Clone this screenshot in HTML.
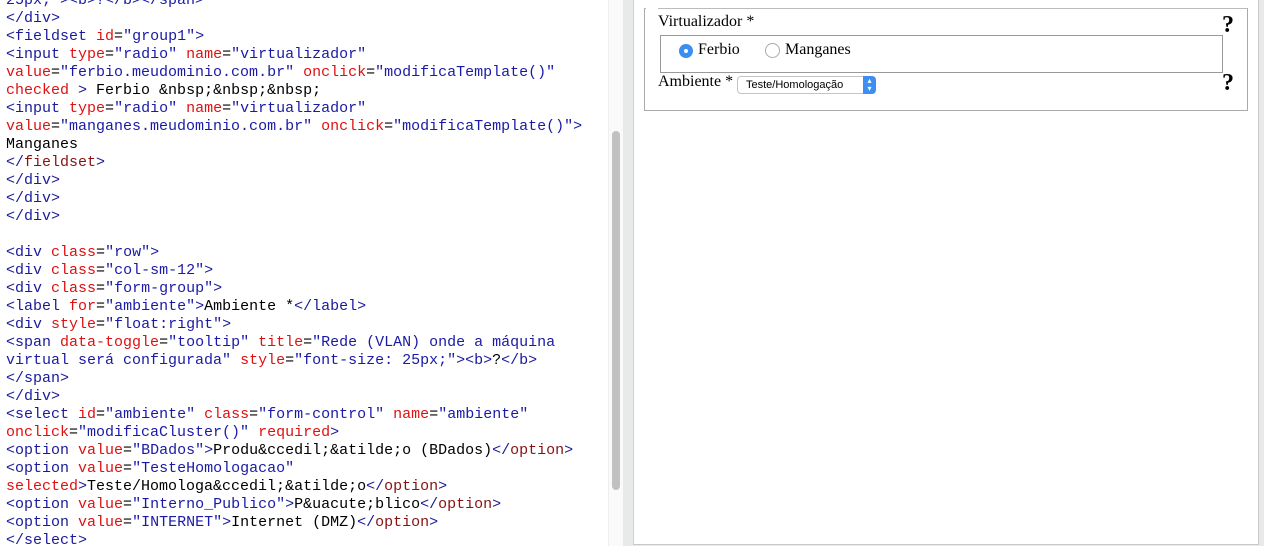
<!DOCTYPE html>
<html><head><meta charset="utf-8"><style>
html,body{margin:0;padding:0;width:1264px;height:546px;overflow:hidden;background:#e8e9e9;}
#left{position:absolute;left:0;top:0;width:623px;height:546px;background:#fff;overflow:hidden;}
#code{position:absolute;left:6px;top:-8px;font-family:"Liberation Mono",monospace;font-size:15px;line-height:18px;white-space:pre;color:#000;}
.t{color:#1a1a9a}.a{color:#e01010}.s{color:#1a1aa6}.c{color:#000}.n{color:#881212}
#track{position:absolute;left:608px;top:0;width:15px;height:546px;background:#fafafa;border-left:1px solid #eee;}
#thumb{position:absolute;left:612px;top:131px;width:8px;height:359px;background:#c1c1c1;border-radius:4px;}
#right{position:absolute;left:633px;top:0;width:624px;height:544px;background:#fff;border-left:1px solid #d0d0d0;border-bottom:1px solid #c8c8c8;border-right:1px solid #c8c8c8;}
.f{font-family:"Liberation Serif",serif;font-size:16px;color:#000;position:absolute;}
</style></head><body>
<div id="left"><div id="code"><span class="s">25px;"&gt;&lt;b&gt;?&lt;/b&gt;&lt;/span&gt;</span>
<span class="t">&lt;/div&gt;</span>
<span class="t">&lt;fieldset</span> <span class="a">id</span>=<span class="s">"group1"</span><span class="t">&gt;</span>
<span class="t">&lt;input</span> <span class="a">type</span>=<span class="s">"radio"</span> <span class="a">name</span>=<span class="s">"virtualizador"</span>
<span class="a">value</span>=<span class="s">"ferbio.meudominio.com.br"</span> <span class="a">onclick</span>=<span class="s">"modificaTemplate()"</span>
<span class="a">checked</span> <span class="t">&gt;</span> Ferbio &amp;nbsp;&amp;nbsp;&amp;nbsp;
<span class="t">&lt;input</span> <span class="a">type</span>=<span class="s">"radio"</span> <span class="a">name</span>=<span class="s">"virtualizador"</span>
<span class="a">value</span>=<span class="s">"manganes.meudominio.com.br"</span> <span class="a">onclick</span>=<span class="s">"modificaTemplate()"</span><span class="t">&gt;</span>
Manganes
<span class="t">&lt;/</span><span class="n">fieldset</span><span class="t">&gt;</span>
<span class="t">&lt;/div&gt;</span>
<span class="t">&lt;/div&gt;</span>
<span class="t">&lt;/div&gt;</span>

<span class="t">&lt;div</span> <span class="a">class</span>=<span class="s">"row"</span><span class="t">&gt;</span>
<span class="t">&lt;div</span> <span class="a">class</span>=<span class="s">"col-sm-12"</span><span class="t">&gt;</span>
<span class="t">&lt;div</span> <span class="a">class</span>=<span class="s">"form-group"</span><span class="t">&gt;</span>
<span class="t">&lt;label</span> <span class="a">for</span>=<span class="s">"ambiente"</span><span class="t">&gt;</span>Ambiente *<span class="t">&lt;/label&gt;</span>
<span class="t">&lt;div</span> <span class="a">style</span>=<span class="s">"float:right"</span><span class="t">&gt;</span>
<span class="t">&lt;span</span> <span class="a">data-toggle</span>=<span class="s">"tooltip"</span> <span class="a">title</span>=<span class="s">"Rede (VLAN) onde a máquina</span>
<span class="s">virtual será configurada"</span> <span class="a">style</span>=<span class="s">"font-size: 25px;"</span><span class="t">&gt;&lt;b&gt;</span>?<span class="t">&lt;/b&gt;</span>
<span class="t">&lt;/span&gt;</span>
<span class="t">&lt;/div&gt;</span>
<span class="t">&lt;select</span> <span class="a">id</span>=<span class="s">"ambiente"</span> <span class="a">class</span>=<span class="s">"form-control"</span> <span class="a">name</span>=<span class="s">"ambiente"</span>
<span class="a">onclick</span>=<span class="s">"modificaCluster()"</span> <span class="a">required</span><span class="t">&gt;</span>
<span class="t">&lt;option</span> <span class="a">value</span>=<span class="s">"BDados"</span><span class="t">&gt;</span>Produ&amp;ccedil;&amp;atilde;o (BDados)<span class="t">&lt;/</span><span class="n">option</span><span class="t">&gt;</span>
<span class="t">&lt;option</span> <span class="a">value</span>=<span class="s">"TesteHomologacao"</span>
<span class="a">selected</span><span class="t">&gt;</span>Teste/Homologa&amp;ccedil;&amp;atilde;o<span class="t">&lt;/</span><span class="n">option</span><span class="t">&gt;</span>
<span class="t">&lt;option</span> <span class="a">value</span>=<span class="s">"Interno_Publico"</span><span class="t">&gt;</span>P&amp;uacute;blico<span class="t">&lt;/</span><span class="n">option</span><span class="t">&gt;</span>
<span class="t">&lt;option</span> <span class="a">value</span>=<span class="s">"INTERNET"</span><span class="t">&gt;</span>Internet (DMZ)<span class="t">&lt;/</span><span class="n">option</span><span class="t">&gt;</span>
<span class="t">&lt;/select&gt;</span></div>
<div id="track"></div><div id="thumb"></div></div>
<div id="right">
 <div style="position:absolute;left:10px;top:8px;width:602px;height:101px;border:1px solid #aaa;border-top-color:#bbb;"></div>
 <div style="position:absolute;left:12px;top:6px;width:12px;height:4px;background:#fff;"></div>
 <div class="f" style="left:24px;top:13px;">Virtualizador *</div>
 <div class="f" style="left:588px;top:12px;font-size:24px;font-weight:bold;">?</div>
 <div style="position:absolute;left:26px;top:35px;width:561px;height:36px;border:1px solid #999;"></div>
 <div style="position:absolute;left:45px;top:44px;width:14px;height:14px;border-radius:50%;background:#3b8ff0;"></div>
 <div style="position:absolute;left:50px;top:49px;width:4px;height:4px;border-radius:50%;background:#fff;"></div>
 <div class="f" style="left:64px;top:41px;">Ferbio</div>
 <div style="position:absolute;left:131px;top:43px;width:13px;height:13px;border-radius:50%;border:1px solid #aaa;background:#fff;"></div>
 <div class="f" style="left:151px;top:41px;">Manganes</div>
 <div class="f" style="left:24px;top:73px;">Ambiente *</div>
 <div style="position:absolute;left:103px;top:76px;width:134px;height:16px;border:1px solid #c4c4c4;border-radius:4px;background:#fff;font-family:'Liberation Sans',sans-serif;font-size:11px;line-height:16px;text-indent:8px;">Teste/Homologação</div>
 <div style="position:absolute;left:229px;top:76px;width:13px;height:18px;border-radius:0 4px 4px 0;background:#3d8ef2;color:#fff;font-size:8px;line-height:8px;text-align:center;padding-top:1px;box-sizing:border-box;">▴<br>▾</div>
 <div class="f" style="left:588px;top:70px;font-size:24px;font-weight:bold;">?</div>
</div>
</body></html>
